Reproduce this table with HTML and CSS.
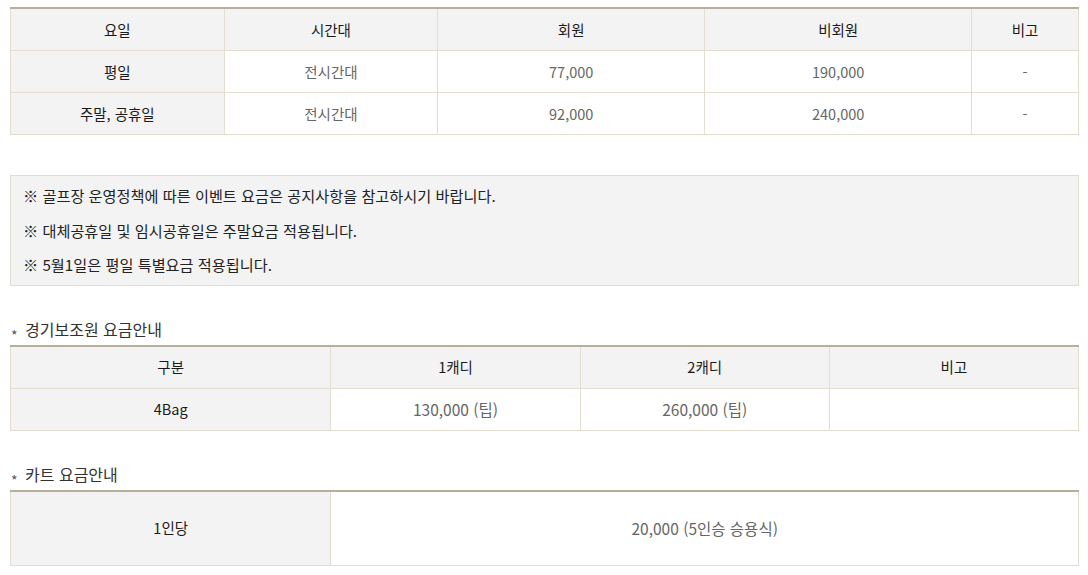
FILE: index.html
```html
<!DOCTYPE html>
<html lang="ko">
<head>
    <meta charset="UTF-8">
    <meta name="viewport" content="width=device-width, initial-scale=1.0">
    <title>요금안내</title>
    <link rel="stylesheet" href="styles.css">
</head>
<body>

    <div class="fee-wrap">

        <table class="fee-table">
            <colgroup>
                <col style="width:20%">
                <col style="width:20%">
                <col style="width:25%">
                <col style="width:25%">
                <col style="width:10%">
            </colgroup>
            <thead>
                <tr>
                    <th>요일</th>
                    <th>시간대</th>
                    <th>회원</th>
                    <th>비회원</th>
                    <th>비고</th>
                </tr>
            </thead>
            <tbody>
                <tr>
                    <th>평일</th>
                    <td>전시간대</td>
                    <td>77,000</td>
                    <td>190,000</td>
                    <td>-</td>
                </tr>
                <tr>
                    <th>주말, 공휴일</th>
                    <td>전시간대</td>
                    <td>92,000</td>
                    <td>240,000</td>
                    <td>-</td>
                </tr>
            </tbody>
        </table>

        <div class="notice-box">
            <p>※ 골프장 운영정책에 따른 이벤트 요금은 공지사항을 참고하시기 바랍니다.</p>
            <p>※ 대체공휴일 및 임시공휴일은 주말요금 적용됩니다.</p>
            <p>※ 5월1일은 평일 특별요금 적용됩니다.</p>
        </div>

        <h3 class="sub-title">경기보조원 요금안내</h3>
        <table class="fee-table">
            <colgroup>
                <col style="width:30%">
                <col>
                <col>
                <col>
            </colgroup>
            <thead>
                <tr>
                    <th>구분</th>
                    <th>1캐디</th>
                    <th>2캐디</th>
                    <th>비고</th>
                </tr>
            </thead>
            <tbody>
                <tr>
                    <th>4Bag</th>
                    <td class="wide">130,000 (팁)</td>
                    <td class="wide">260,000 (팁)</td>
                    <td></td>
                </tr>
            </tbody>
        </table>

        <h3 class="sub-title">카트 요금안내</h3>
        <table class="fee-table">
            <colgroup>
                <col style="width:30%">
                <col>
            </colgroup>
            <tbody>
                <tr class="tall">
                    <th>1인당</th>
                    <td class="wide">20,000 (5인승 승용식)</td>
                </tr>
            </tbody>
        </table>

    </div>

</body>
</html>
```

FILE: styles.css
```css
body {
    margin: 0;
    font-family: 'Noto Sans CJK KR', 'Noto Sans', sans-serif;
    color: #333;
    background-color: #fff;
}
.fee-wrap {
    padding: 7px 9px 0 10px;
}
.fee-table {
    width: 100%;
    border-collapse: collapse;
    table-layout: fixed;
    border-top: 2px solid #b8ae9c;
    font-size: 14.5px;
}
.fee-table th,
.fee-table td {
    height: 41px;
    padding: 0 5px;
    border: 1px solid #e3ddd0;
    text-align: center;
    vertical-align: middle;
    line-height: 20px;
}
.fee-table tr:first-child th,
.fee-table tr:first-child td {
    border-top: none;
}
.fee-table th {
    background-color: #f3f3f3;
    color: #1a1a1a;
    font-weight: 400;
}
.fee-table td {
    background-color: #fff;
    color: #666;
}
.fee-table td.wide {
    font-size: 15.5px;
}
.fee-table tr.tall th,
.fee-table tr.tall td {
    height: 73px;
}
.notice-box {
    margin-top: 40px;
    padding: 2px 12px 3px 12px;
    background-color: #f3f3f3;
    border: 1px solid #e0dcd4;
}
.notice-box p {
    margin: 0;
    font-size: 15.2px;
    line-height: 34.5px;
    color: #222;
}
.sub-title {
    margin: 33px 0 6px 0;
    padding-left: 15px;
    position: relative;
    font-size: 16px;
    font-weight: 400;
    line-height: 20px;
    color: #333;
}
.sub-title::before {
    content: "*";
    position: absolute;
    left: 1px;
    top: 6px;
    font-size: 14px;
    color: #555;
}
```
